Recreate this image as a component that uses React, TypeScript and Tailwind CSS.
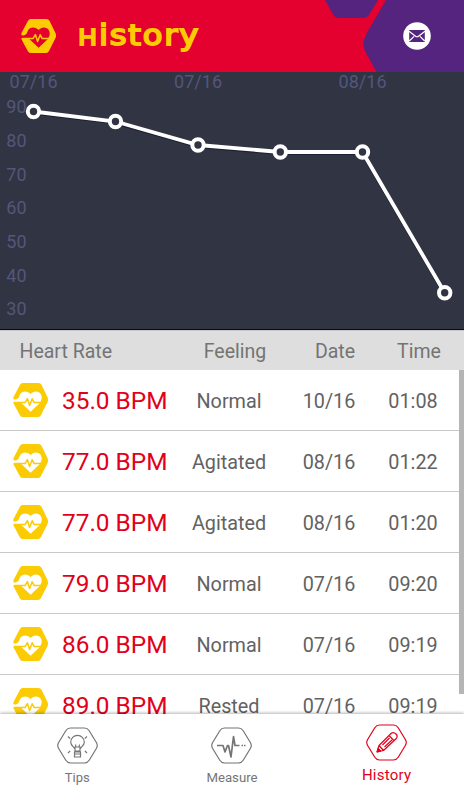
import React from 'react';

const points = [
  [33.5, 39.5],
  [115.5, 49.5],
  [198, 73],
  [280.3, 80],
  [362.5, 80],
  [444.7, 220.8],
];

const rows = [
  ['35.0 BPM', 'Normal', '10/16', '01:08'],
  ['77.0 BPM', 'Agitated', '08/16', '01:22'],
  ['77.0 BPM', 'Agitated', '08/16', '01:20'],
  ['79.0 BPM', 'Normal', '07/16', '09:20'],
  ['86.0 BPM', 'Normal', '07/16', '09:19'],
  ['89.0 BPM', 'Rested', '07/16', '09:19'],
];

function HeartHex({ heart }: { heart: string }) {
  return (
    <svg viewBox="0 0 36 34" className="block h-[34px] w-9 shrink-0">
      <path
        d="M9.5 0H25.5Q27.5 0 28.5 1.7L34.7 14.5Q35.5 16.8 34.5 19L28 32Q27 34 25 34H10Q8 34 7 32.5L.6 20.5Q0 17.5 .5 14L7 1.7Q8 0 9.5 0Z"
        fill="#fbcb04"
      />
      <path
        d="M17.6 11C14.8 7.6 9 7.6 7 11.4Q6 15.2 3.4 16.2Q1.5 16.8 0 16V18.9H7.2L8.8 20.5L17.6 28.8L26.6 20.3Q30 15 28 11.4C25.8 7.6 20.4 7.6 17.6 11Z"
        fill={heart}
      />
      <path
        d="M1.8 19.6H12L14.4 15.6L16.6 22.4L19.2 15.8L21.2 19.6H28"
        fill="none"
        stroke="#fbcb04"
        strokeWidth="1.5"
        strokeLinejoin="round"
        strokeLinecap="round"
      />
    </svg>
  );
}

function Hex() {
  return (
    <path
      d="M13.5 1H27.5Q30.5 1 32.2 3.7L39.5 15.7Q41 18.5 39.5 21.3L32.2 33.3Q30.5 36 27.5 36H13.5Q10.5 36 8.8 33.3L1.5 21.3Q0 18.5 1.5 15.7L8.8 3.7Q10.5 1 13.5 1Z"
      strokeWidth="1.2"
    />
  );
}

const iconClass = 'block h-[37px] w-[41px] fill-none stroke-current';

function Header() {
  return (
    <header className="relative flex h-[72px] shrink-0 items-center justify-between bg-[#e4002f] pl-[20.5px] pr-[33px]">
      <svg viewBox="0 0 464 72" className="absolute inset-0 h-[72px] w-[464px]">
        <path d="M325 0H378L369.5 14Q367 18 363 18H339Q335 18 332.5 13.5Z" fill="#54247f" />
        <path d="M386 0H464V72H376.5L366 53Q361 44 366 34.5Z" fill="#54247f" />
      </svg>
      <div className="relative flex items-center">
        <HeartHex heart="#e4002f" />
        <h1 className="ml-[21.5px] flex h-9 w-[106px] origin-left scale-x-[1.15] items-baseline whitespace-nowrap font-['DejaVu_Sans',sans-serif] text-[28px] font-normal leading-[35px] tracking-[1.6px] text-[#fbcb04] [-webkit-text-stroke:1.8px_#fbcb04]">
          <span className="text-[22px]">H</span>
          <span>istory</span>
        </h1>
      </div>
      <svg viewBox="0 0 28 28" className="relative block size-7">
        <circle cx="14" cy="14" r="13.8" fill="#fff" />
        <path d="M6.2 8H21.8V20H6.2Z" fill="#54247f" />
        <path d="M6 9.2L12.2 14Q14 15.5 15.8 14L22 9.2M6.3 19L11 14.4M21.7 19L17 14.4" fill="none" stroke="#fff" strokeWidth="1.2" />
      </svg>
    </header>
  );
}

function Chart() {
  return (
    <svg viewBox="0 0 464 259" className="block h-[259px] w-full shrink-0 bg-[#313443] font-['Roboto',sans-serif]">
      <g fill="#54567a" fontSize="18">
        {[33.5, 198, 362.5].map((x, i) => (
          <text key={x} x={x} y="16.4" textAnchor="middle" textLength="48">{i === 2 ? '08/16' : '07/16'}</text>
        ))}
        {[90, 80, 70, 60, 50, 40, 30].map((n, i) => (
          <text key={n} x="6.3" y={41.2 + i * 33.7}>{n}</text>
        ))}
      </g>
      <polyline points={points.join(' ')} transform="translate(0 1)" fill="none" stroke="#1d1f33" strokeWidth="4" />
      <polyline points={points.join(' ')} fill="none" stroke="#fff" strokeWidth="3.8" />
      {points.map(([x, y]) => (
        <circle key={x} cx={x} cy={y} r="5.7" fill="#313443" stroke="#fff" strokeWidth="4" />
      ))}
      <path d="M0 257.5H464" stroke="#080820" strokeWidth="1" />
      <path d="M0 258.5H464" stroke="#c8c8cc" strokeWidth="1" />
    </svg>
  );
}

export default function App() {
  return (
    <div className="flex h-[800px] w-[464px] flex-col overflow-hidden bg-white font-['Roboto',sans-serif] text-[#626262]">
      <Header />
      <Chart />
      <div className="grid h-[39px] shrink-0 grid-cols-[184px_102px_98px_70px] items-center bg-[#dedede] pt-0.5 text-[19.5px] text-[#747474]">
        <span className="pl-[19.5px]">Heart Rate</span>
        <span className="text-center">Feeling</span>
        <span className="text-center">Date</span>
        <span className="text-center">Time</span>
      </div>
      <main className="relative h-[344px] shrink-0 overflow-hidden">
        {rows.map((row, i) => (
          <div
            key={i}
            className="grid h-[61px] grid-cols-[62px_116px_102px_98px_70px] items-center border-b border-[#c8c8c8] text-[19.8px]"
          >
            <div className="pl-[12.5px]"><HeartHex heart="#fff" /></div>
            <span className="whitespace-nowrap pt-[3px] text-[24.4px] text-[#e2001a]">{row[0]}</span>
            <span className="pt-[3px] text-center">{row[1]}</span>
            <span className="pt-[3px] text-center">{row[2]}</span>
            <span className="pt-[3px] text-center">{row[3]}</span>
          </div>
        ))}
        <div className="absolute right-0 top-0 h-[324px] w-[5px] bg-[#b5b5b5]" />
      </main>
      <nav className="relative grid h-[86px] shrink-0 grid-cols-3 bg-white text-[13px] text-[#757575] shadow-[0_-1px_3px_rgba(0,0,0,0.3)]">
        <div className="flex flex-col items-center pt-[13px]">
          <svg viewBox="0 0 41 37" className={iconClass}>
            <Hex />
            <path d="M18.2 22.5C18 20.5 13.7 19 13.7 15.2A6.8 6.8 0 0 1 27.3 15.2C27.3 19 23 20.5 22.8 22.5M18 20H23V24H18ZM17.5 25H23.5V30H17.5ZM17.5 27H23.5M17.5 24.7H23.5M19 20L18.5 17.5M22 20L22.5 17.5M11 9.5L13.2 11.7M30 9.5L27.8 11.7M11 26L13.2 23.8M30 26L27.8 23.8" strokeWidth="1.2" />
          </svg>
          <span className="mt-1 leading-5">Tips</span>
        </div>
        <div className="flex flex-col items-center pt-[13px]">
          <svg viewBox="0 0 41 37" className={iconClass}>
            <Hex />
            <path d="M6 18.5H12L14 25L16.5 18.5H17.5L20 30L22.5 9.5L24 18.5H28.5M30.5 18.5H32M33 18.5H34.5" strokeWidth="1.7" strokeLinejoin="round" />
          </svg>
          <span className="mt-1 text-[13.2px] leading-5">Measure</span>
        </div>
        <div className="flex flex-col items-center pt-2.5 text-[#e2001a]">
          <svg viewBox="0 0 41 37" className={iconClass}>
            <Hex />
            <path d="M11 28L13 21.5L25 9.5Q27.5 7.5 30 10Q32.3 12.3 30 14.8L17.5 26.5ZM13 21.5L17.5 26.5M23 11.5L27.8 16.5M16.5 21L23.5 14M18.5 23L26 16" strokeWidth="1.2" strokeLinejoin="round" />
            <path d="M11 28L12.2 24L15 27Z" fill="currentColor" />
          </svg>
          <span className="mt-[3.5px] text-[15px] leading-5 tracking-[0.25px]">History</span>
        </div>
      </nav>
    </div>
  );
}
